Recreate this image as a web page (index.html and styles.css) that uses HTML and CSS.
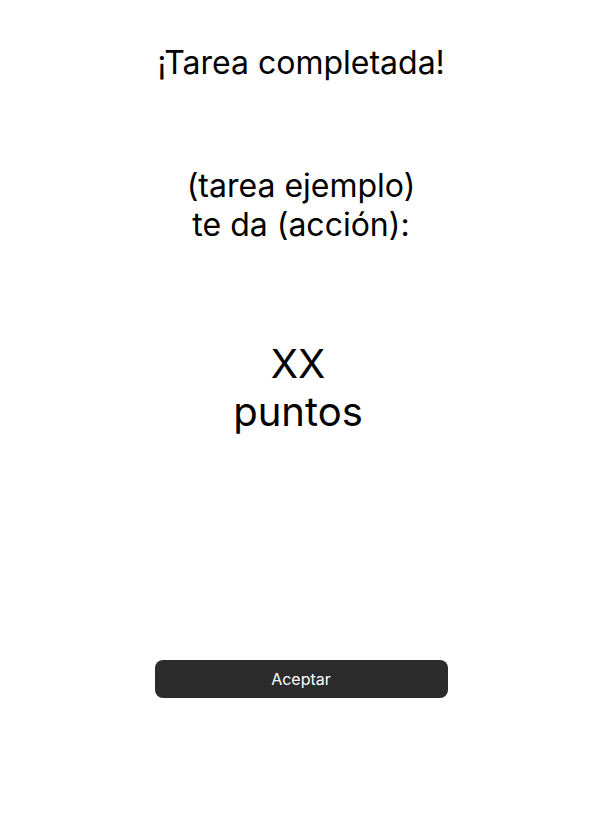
FILE: index.html
```html
<!DOCTYPE html>
<html lang="es">
<head>
<meta charset="utf-8">
<link rel="stylesheet" href="styles.css">
</head>
<body>
<main class="screen">
  <h1 class="title">¡Tarea completada!</h1>
  <p class="task">(tarea ejemplo)<br>te da (acción):</p>
  <p class="points">XX<br>puntos</p>
  <button class="accept">Aceptar</button>
</main>
</body>
</html>
```

FILE: styles.css
```css
html, body {
  margin: 0;
  padding: 0;
  background: #ffffff;
}
body {
  font-family: Inter, "Noto Sans", sans-serif;
  color: #000000;
  width: 599px;
  height: 835px;
}
.screen {
  display: flex;
  flex-direction: column;
  align-items: center;
  padding: 43px 0 0 3px;
}
.title {
  margin: 0;
  font-size: 32px;
  font-weight: 400;
  line-height: 39px;
  text-align: center;
}
.task {
  margin: 84px 0 0;
  font-size: 32px;
  line-height: 39px;
  text-align: center;
}
.points {
  margin: 96px 6px 0 0;
  font-size: 40px;
  line-height: 48px;
  text-align: center;
}
.accept {
  margin-top: 224px;
  width: 293px;
  height: 38px;
  border: none;
  border-radius: 8px;
  background: #2c2c2c;
  color: #ffffff;
  font-family: Inter, sans-serif;
  font-size: 16px;
  cursor: pointer;
}
```
